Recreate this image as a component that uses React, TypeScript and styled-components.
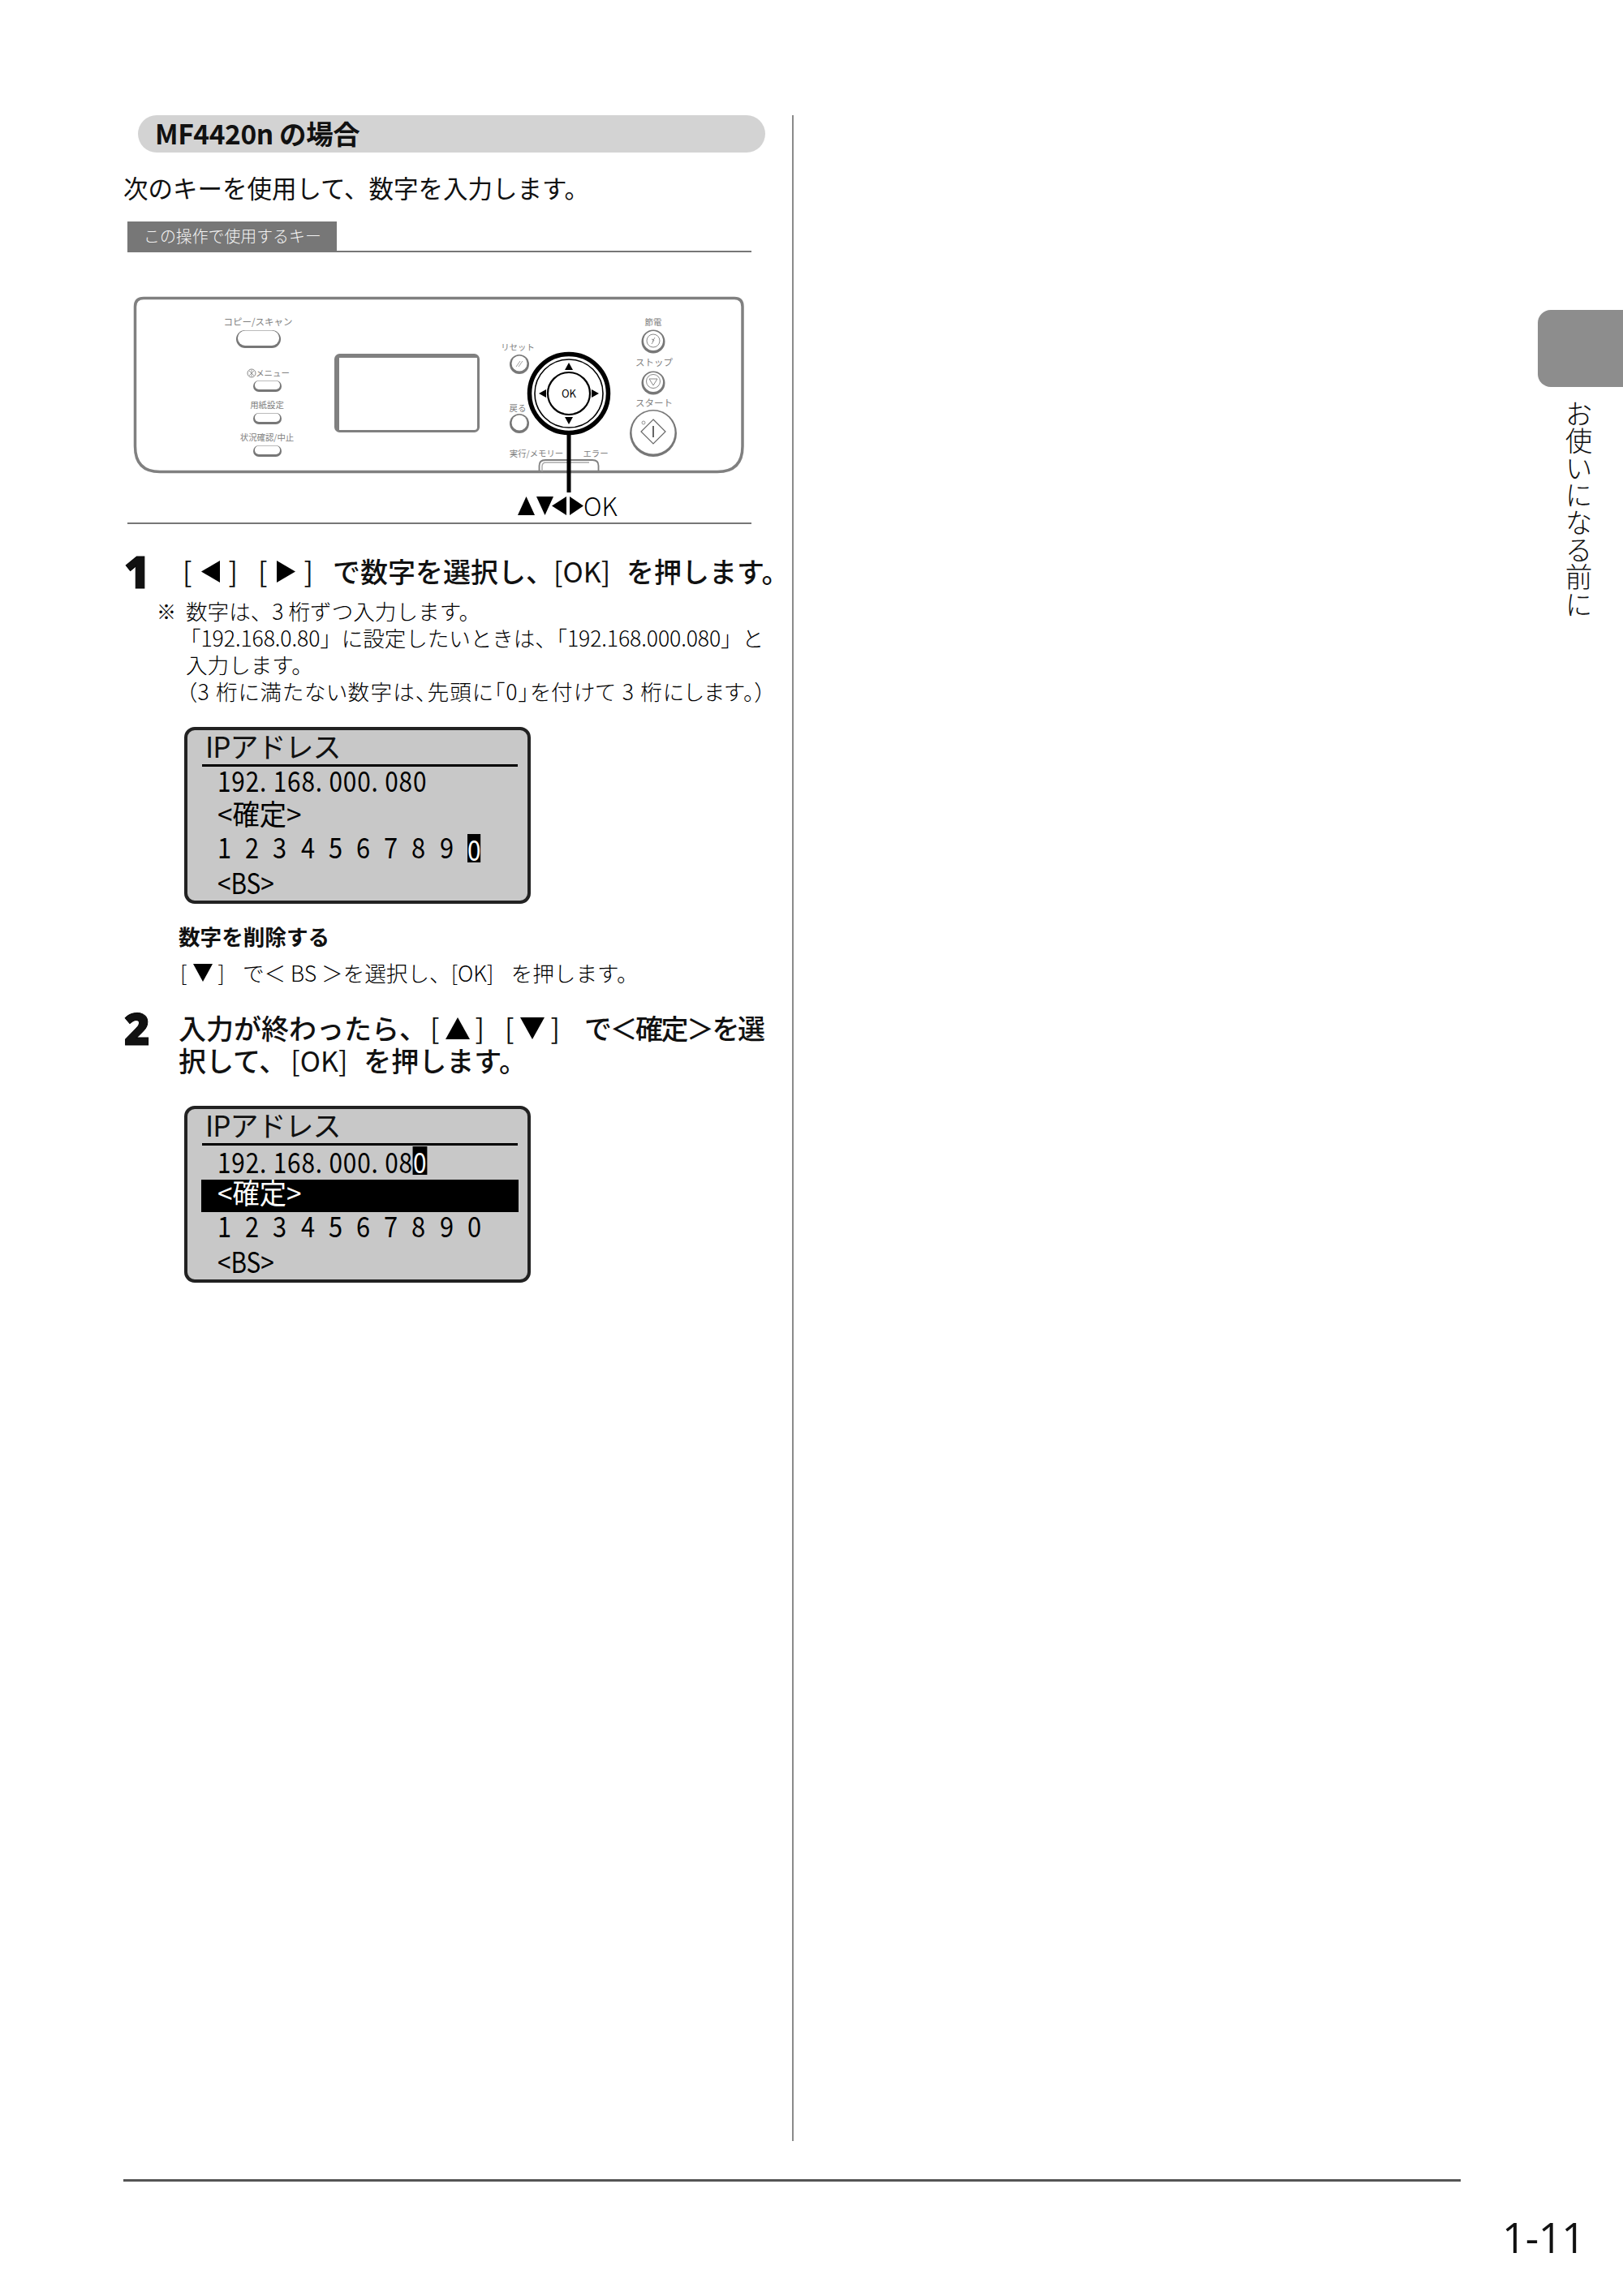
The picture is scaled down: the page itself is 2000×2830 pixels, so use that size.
import React from "react";
import styled, { createGlobalStyle } from "styled-components";

const GlobalStyle = createGlobalStyle`
  html, body {
    margin: 0;
    padding: 0;
    background: #fff;
  }
  body {
    font-family: "Noto Sans CJK JP", "Open Sans", sans-serif;
    color: #111;
  }
`;

const Page = styled.div`
  width: 2000px;
  height: 2830px;
  overflow: hidden;
  display: flex;
  flex-direction: column;
`;

const Body = styled.div`
  display: flex;
  padding-top: 142px;
  height: 2497px;
`;

const MainColumn = styled.main`
  width: 824px;
  margin-left: 152px;
  border-right: 2px solid #8a8a8a;
`;

const SectionPill = styled.h2`
  margin: 0 0 0 18px;
  width: 752px;
  height: 46px;
  padding-left: 21px;
  border-radius: 23px;
  background: #d3d3d3;
  font-size: 33.5px;
  font-weight: 700;
  line-height: 44px;
  letter-spacing: -0.4px;
`;

const Intro = styled.p`
  margin: 23px 0 0;
  font-size: 30.5px;
  line-height: 40px;
  font-weight: 400;
`;

const KeyCaption = styled.div`
  margin: 22px 0 0 5px;
  width: 769px;
  height: 38px;
  border-bottom: 2px solid #777;
  box-sizing: border-box;
`;

const KeyTag = styled.span`
  display: block;
  width: 258px;
  height: 38px;
  padding-left: 20px;
  box-sizing: border-box;
  background: #777;
  color: #f4f4f4;
  font-size: 19.9px;
  line-height: 36px;
  font-weight: 300;
  white-space: nowrap;
`;

const PanelFigure = styled.figure`
  margin: 0 0 0 5px;
  width: 769px;
  height: 335px;
  border-bottom: 2px solid #777;
  box-sizing: border-box;
  display: block;
  svg {
    display: block;
  }
`;

const PanelLabel = styled.text<{ $size?: number }>`
  font-family: "Noto Sans CJK JP", sans-serif;
  font-size: ${({ $size }) => $size ?? 10.4}px;
  fill: #808080;
`;

const Step = styled.section<{ $gap: number }>`
  margin-top: ${({ $gap }) => $gap}px;
  display: grid;
  grid-template-columns: 68px 1fr;
`;

const StepNumber = styled.div`
  padding-left: 1px;
  font-family: "Open Sans", sans-serif;
  font-weight: 800;
  font-size: 54px;
  line-height: 40px;
  -webkit-text-stroke: 1px #000;
`;

const StepTitle = styled.h3<{ $inset?: number }>`
  margin: 0;
  padding-left: ${({ $inset }) => $inset ?? 0}px;
  font-size: 34px;
  line-height: 40px;
  font-weight: 500;
  white-space: nowrap;
`;

// [key] group: fixed width, brackets at its edges
const KeyBox = styled.span<{ $width: number; $before?: number; $after: number; $light?: boolean }>`
  display: inline-flex;
  justify-content: space-between;
  align-items: center;
  width: ${({ $width }) => $width}px;
  margin-left: ${({ $before }) => $before ?? 0}px;
  margin-right: ${({ $after }) => $after}px;
  font-weight: ${({ $light }) => ($light ? 300 : 400)};
`;

const Tight = styled.span`
  letter-spacing: -2.5px;
`;

const Notes = styled.div`
  margin: 12px 0 0 41px;
  display: grid;
  grid-template-columns: 36px 1fr;
  font-size: 26.6px;
  line-height: 33px;
  font-weight: 300;
  color: #000;
`;

const NoteMark = styled.span`
  font-size: 24px;
`;

const NoteLine = styled.div<{ $palt?: boolean; $spacing?: number; $shift?: number }>`
  white-space: nowrap;
  margin-left: ${({ $shift }) => $shift ?? 0}px;
  font-feature-settings: ${({ $palt }) => ($palt ? '"palt"' : "normal")};
  letter-spacing: ${({ $spacing }) => $spacing ?? 0}px;
`;

const Lcd = styled.div<{ $gap: number }>`
  margin: ${({ $gap }) => $gap}px 0 0 75px;
  width: 427px;
  height: 218px;
  box-sizing: border-box;
  border: 4px solid #222;
  border-radius: 13px;
  background: #c8c8c8;
`;

const LcdTitle = styled.div`
  margin: 0 12px 0 18px;
  height: 45px;
  box-sizing: border-box;
  border-bottom: 3px solid #000;
  padding-left: 4px;
  font-size: 35px;
  line-height: 37px;
  letter-spacing: -1px;
  font-weight: 400;
`;

const LcdRow = styled.div<{ $active?: boolean }>`
  margin: 1px 11px 1px 17px;
  height: 40px;
  padding-left: 20px;
  font-size: 35px;
  line-height: 30px;
  font-weight: 400;
  white-space: nowrap;
  display: flex;
  background: ${({ $active }) => ($active ? "#000" : "transparent")};
  color: ${({ $active }) => ($active ? "#fff" : "#000")};
  &:last-child {
    line-height: 36px;
  }
`;

const Narrow = styled.span<{ $scale: number; $spacing?: number }>`
  display: inline-block;
  transform: scaleX(${({ $scale }) => $scale});
  transform-origin: left center;
  letter-spacing: ${({ $spacing }) => $spacing ?? 0}px;
`;

const Digit = styled.span`
  display: inline-block;
  width: 34.2px;
  transform: scaleX(0.88);
  transform-origin: left center;
`;

const Cursor = styled.span`
  display: inline-block;
  background: #000;
  color: #fff;
  height: 35px;
  line-height: 35px;
`;

const SubHeading = styled.h4`
  margin: 22px 0 0 68px;
  font-size: 26.6px;
  line-height: 36px;
  font-weight: 700;
`;

const SubText = styled.p`
  margin: 9px 0 0 70px;
  font-size: 26.6px;
  line-height: 36px;
  font-weight: 300;
  white-space: nowrap;
  color: #000;
`;

const Side = styled.aside`
  margin-left: auto;
  width: 105px;
  padding-top: 240px;
`;

const ChapterTab = styled.div`
  height: 95px;
  border-radius: 16px 0 0 16px;
  background: #8d8d8d;
`;

const ChapterTitle = styled.div`
  margin: 16px 0 0 32px;
  writing-mode: vertical-rl;
  font-size: 33.6px;
  line-height: 36px;
  font-weight: 300;
`;

const Footer = styled.footer`
  padding: 47px 0 0 152px;
`;

const FooterRule = styled.div`
  width: 1648px;
  height: 3px;
  background: #555;
`;

const PageNumber = styled.div`
  margin: 38px 47px 0 0;
  text-align: right;
  font-family: "Open Sans", sans-serif;
  font-size: 51px;
  line-height: 60px;
  font-weight: 400;
  letter-spacing: -0.5px;
`;

// triangle for the cursor keys in running text
function Tri({ dir, w, h }: { dir: "up" | "down" | "left" | "right"; w: number; h: number }) {
  const pts = {
    up: "12,0 24,24 0,24",
    down: "0,0 24,0 12,24",
    left: "24,0 24,24 0,12",
    right: "0,0 0,24 24,12",
  }[dir];
  return (
    <svg width={w} height={h} viewBox="0 0 24 24" preserveAspectRatio="none">
      <polygon points={pts} fill="#000" />
    </svg>
  );
}

function Capsule({ x, y, w, h }: { x: number; y: number; w: number; h: number }) {
  return (
    <g>
      <rect x={x} y={y + 1} width={w} height={h} rx={h / 2} fill="#777" />
      <rect x={x + 2} y={y + 1.5} width={w - 4} height={h - 3.5} rx={(h - 4) / 2} fill="#fff" />
    </g>
  );
}

function Round({ cx, cy, r, children }: { cx: number; cy: number; r: number; children?: React.ReactNode }) {
  return (
    <g>
      <circle cx={cx} cy={cy + 1} r={r} fill="#777" />
      <circle cx={cx} cy={cy} r={r - 2.5} fill="#fff" />
      {children}
    </g>
  );
}

function ControlPanel() {
  return (
    <svg width={769} height={333} viewBox="157 311 769 333">
      {/* body */}
      <path
        d="M177 367.5 H905 Q915 367.5 915 378 V550 Q915 581.5 884 581.5 H197 Q166.5 581.5 166.5 550 V378 Q166.5 367.5 177 367.5 Z"
        fill="#fff"
        stroke="#808080"
        strokeWidth={3.5}
      />

      <PanelLabel $size={11.5} x={318} y={401} textAnchor="middle">コピー/スキャン</PanelLabel>
      <Capsule x={291} y={406} w={55} h={22} />
      <circle cx={310} cy={460} r={5} fill="none" stroke="#888" strokeWidth={1} />
      <path d="M307 457 L313 463 M313 457 L307 463 M310 456 V464" stroke="#888" strokeWidth={0.8} />
      <PanelLabel x={336} y={464} textAnchor="middle">メニュー</PanelLabel>
      <Capsule x={312} y={468} w={35} h={14} />
      <PanelLabel x={329} y={503} textAnchor="middle">用紙設定</PanelLabel>
      <Capsule x={312} y={508} w={35} h={14} />
      <PanelLabel x={329} y={543} textAnchor="middle">状況確認/中止</PanelLabel>
      <Capsule x={312} y={548} w={35} h={14} />

      {/* LCD window */}
      <rect x={413.5} y={437.5} width={176} height={94} rx={5} fill="#fff" stroke="#808080" strokeWidth={3} />
      <path d="M414 444 Q414 438 420 438 H589 V441 H418 V531 H414 Z" fill="#808080" />

      <PanelLabel x={638} y={432} textAnchor="middle">リセット</PanelLabel>
      <Round cx={640} cy={448} r={12}>
        <path d="M636 452 L641 445 M639 452 L644 445" stroke="#888" strokeWidth={0.8} />
      </Round>
      <PanelLabel x={638} y={507} textAnchor="middle">戻る</PanelLabel>
      <Round cx={640} cy={521} r={12} />

      {/* d-pad */}
      <circle cx={701} cy={485} r={48.5} fill="#fff" stroke="#000" strokeWidth={5.5} />
      <circle cx={701} cy={485} r={42} fill="none" stroke="#000" strokeWidth={1.6} />
      <circle cx={701} cy={485} r={26} fill="#fff" stroke="#000" strokeWidth={2.2} />
      <polygon points="701,447 706,456 696,456" fill="#000" />
      <polygon points="701,523 706,514 696,514" fill="#000" />
      <polygon points="664,485 673,480 673,490" fill="#000" />
      <polygon points="738,485 729,480 729,490" fill="#000" />
      <text x={701} y={490} textAnchor="middle" fontSize={13} fontFamily="'Noto Sans CJK JP', sans-serif" fill="#000">
        OK
      </text>

      <PanelLabel x={805} y={401} textAnchor="middle">節電</PanelLabel>
      <Round cx={805} cy={420} r={14.5}>
        <circle cx={805} cy={420} r={8} fill="none" stroke="#888" strokeWidth={1} />
        <path d="M803 424 L806 419 L803 418 M807 416 L804 421" stroke="#888" strokeWidth={0.9} fill="none" />
      </Round>
      <PanelLabel $size={11.5} x={806} y={451} textAnchor="middle">ストップ</PanelLabel>
      <Round cx={805} cy={471} r={14.5}>
        <circle cx={805} cy={470} r={8.5} fill="none" stroke="#888" strokeWidth={1} />
        <polygon points="800,467 810,467 805,475" fill="none" stroke="#888" strokeWidth={1} />
      </Round>
      <PanelLabel $size={11.5} x={806} y={501} textAnchor="middle">スタート</PanelLabel>
      <Round cx={805} cy={533} r={29}>
        <circle cx={793} cy={521} r={2} fill="none" stroke="#888" strokeWidth={0.9} />
        <polygon points="805,517 820,532 805,547 790,532" fill="none" stroke="#666" strokeWidth={1.2} />
        <path d="M805 525 V539" stroke="#666" strokeWidth={2} />
      </Round>

      <PanelLabel x={661} y={563} textAnchor="middle">実行/メモリー</PanelLabel>
      <PanelLabel x={734} y={563} textAnchor="middle">エラー</PanelLabel>
      <path d="M664.5 581 V574 Q664.5 567 672 567 H730 Q737.5 567 737.5 574 V581" fill="none" stroke="#808080" strokeWidth={1.8} />
      <path d="M668 581 V575 Q668 570 673 570 H726" fill="none" stroke="#aaa" strokeWidth={1.4} />

      {/* leader and caption */}
      <rect x={698.5} y={533} width={5} height={74} fill="#000" />
      <polygon points="638,635 648.5,612 659,635" fill="#000" />
      <polygon points="661,612 682,612 671.5,635" fill="#000" />
      <polygon points="698,612 698,635 680,623.5" fill="#000" />
      <polygon points="702,612 702,635 719,623.5" fill="#000" />
      <text x={719} y={636} fontSize={31} fontFamily="'Noto Sans CJK JP', sans-serif" fontWeight={300} fill="#000">
        OK
      </text>
    </svg>
  );
}

function LcdScreen({ gap, done }: { gap: number; done?: boolean }) {
  return (
    <Lcd $gap={gap}>
      <LcdTitle>IPアドレス</LcdTitle>
      <LcdRow>
        <Narrow $scale={0.85} $spacing={1}>
          192. 168. 000. 08{done ? <Cursor>0</Cursor> : "0"}
        </Narrow>
      </LcdRow>
      <LcdRow $active={done}>
        <Narrow $scale={0.95}>{"<確定>"}</Narrow>
      </LcdRow>
      <LcdRow>
        {["1", "2", "3", "4", "5", "6", "7", "8", "9"].map((d) => (
          <Digit key={d}>{d}</Digit>
        ))}
        {done ? (
          <Digit>0</Digit>
        ) : (
          <Narrow $scale={0.85}>
            <Cursor>0</Cursor>
          </Narrow>
        )}
      </LcdRow>
      <LcdRow>
        <Narrow $scale={0.85}>{"<BS>"}</Narrow>
      </LcdRow>
    </Lcd>
  );
}

export default function App() {
  return (
    <>
      <GlobalStyle />
      <Page>
        <Body>
          <MainColumn>
            <SectionPill>MF4420n の場合</SectionPill>
            <Intro>次のキーを使用して、数字を入力します。</Intro>
            <KeyCaption>
              <KeyTag>この操作で使用するキー</KeyTag>
            </KeyCaption>
            <PanelFigure>
              <ControlPanel />
            </PanelFigure>

            <Step $gap={38}>
              <StepNumber>1</StepNumber>
              <StepTitle $inset={5}>
                <KeyBox $width={68} $after={25}>
                  [<Tri dir="left" w={23} h={27} />]
                </KeyBox>
                <KeyBox $width={68} $after={24}>
                  [<Tri dir="right" w={23} h={27} />]
                </KeyBox>
                で数字を選択し、
                <KeyBox $width={70} $after={20}>
                  [<span>OK</span>]
                </KeyBox>
                を押します。
              </StepTitle>
            </Step>
            <Notes>
              <NoteMark>※</NoteMark>
              <div>
                <NoteLine>数字は、3 桁ずつ入力します。</NoteLine>
                <NoteLine $shift={-8} $spacing={-0.1}>「192.168.0.80」に設定したいときは、「192.168.000.080」と</NoteLine>
                <NoteLine>入力します。</NoteLine>
                <NoteLine $palt $spacing={1.2}>（3 桁に満たない数字は、先頭に「0」を付けて 3 桁にします。）</NoteLine>
              </div>
            </Notes>
            <LcdScreen gap={28} />
            <SubHeading>数字を削除する</SubHeading>
            <SubText>
              <KeyBox $light $width={55} $after={22}>
                [<Tri dir="down" w={24} h={22} />]
              </KeyBox>
              で＜ BS ＞を選択し、
              <KeyBox $light $width={52} $after={22}>
                [<span>OK</span>]
              </KeyBox>
              を押します。
            </SubText>

            <Step $gap={30}>
              <StepNumber>2</StepNumber>
              <StepTitle>
                入力が終わったら、
                <KeyBox $width={67} $before={4} $after={25}>
                  [<Tri dir="up" w={30} h={27} />]
                </KeyBox>
                <KeyBox $width={68} $after={30}>
                  [<Tri dir="down" w={30} h={27} />]
                </KeyBox>
                <Tight>で＜確定＞を選</Tight>
                <br />
                択して、
                <KeyBox $width={70} $before={5} $after={20}>
                  [<span>OK</span>]
                </KeyBox>
                を押します。
              </StepTitle>
            </Step>
            <LcdScreen gap={36} done />
          </MainColumn>
          <Side>
            <ChapterTab />
            <ChapterTitle>お使いになる前に</ChapterTitle>
          </Side>
        </Body>
        <Footer>
          <FooterRule />
          <PageNumber>1-11</PageNumber>
        </Footer>
      </Page>
    </>
  );
}
